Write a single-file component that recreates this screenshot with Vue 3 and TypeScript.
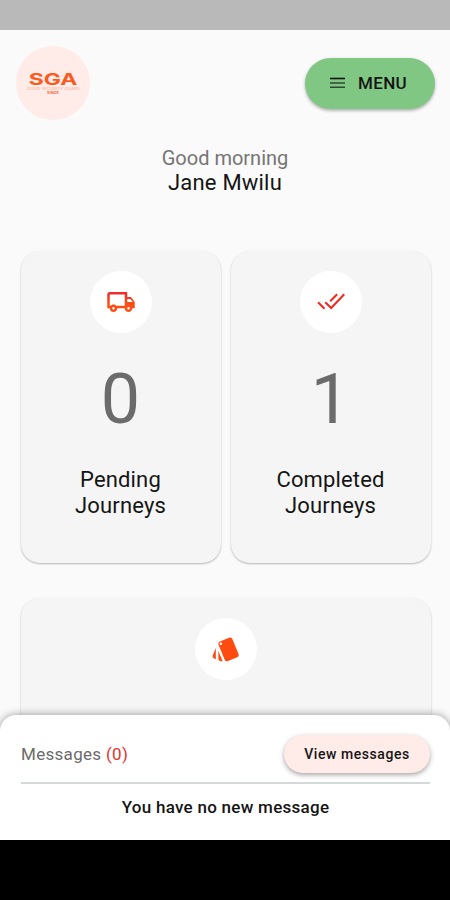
<script setup lang="ts">
interface Stat {
  icon: 'truck' | 'checks'
  count: number
  label: string
}

const userName = 'Jane Mwilu'
const messageCount = 0
const stats: Stat[] = [
  { icon: 'truck', count: 0, label: 'Pending Journeys' },
  { icon: 'checks', count: 1, label: 'Completed Journeys' },
]
</script>

<template>
  <div class="screen">
    <div class="status-bar"></div>
    <main class="content">
      <header class="header">
        <div class="logo">
          <svg width="74" height="74" viewBox="0 0 74 74">
            <text class="logo-name" x="12.800" y="39.300" textLength="48.500" lengthAdjust="spacingAndGlyphs">SGA</text>
            <text class="logo-line" x="11" y="43.600" textLength="53" lengthAdjust="spacingAndGlyphs">GOOD SECURITY GUARD</text>
            <text class="logo-sub" x="31" y="48.200" textLength="12" lengthAdjust="spacingAndGlyphs">SINCE</text>
          </svg>
        </div>
        <button class="menu">
          <svg width="15" height="12" viewBox="0 0 15 12">
            <path d="M0 1.500h15" stroke="#0c140d" stroke-width="1.600" />
            <path d="M0 6h15M0 10.300h15" stroke="#2f4a31" stroke-width="1.500" />
          </svg>
          <span>MENU</span>
        </button>
      </header>

      <section class="greeting">
        <div class="hello">Good morning</div>
        <div class="name">{{ userName }}</div>
      </section>

      <section class="cards">
        <article v-for="s in stats" :key="s.label" class="card">
          <div class="badge">
            <svg v-if="s.icon === 'truck'" width="30" height="30" viewBox="0 0 24 24">
              <defs>
                <linearGradient id="truckFill" x1="0" y1="0" x2="0" y2="1">
                  <stop offset="0" stop-color="#f0282c" />
                  <stop offset="0.6" stop-color="#ff4e14" />
                </linearGradient>
              </defs>
              <path fill="url(#truckFill)" d="M20 8h-3V4H3c-1.100 0-2 .9-2 2v11h2c0 1.660 1.340 3 3 3s3-1.340 3-3h6c0 1.660 1.340 3 3 3s3-1.340 3-3h2v-5l-3-4zm-.5 1.500l1.960 2.500H17V9.500h2.500zM6 18c-.55 0-1-.45-1-1s.45-1 1-1 1 .45 1 1-.45 1-1 1zm2.220-3c-.55-.61-1.330-1-2.220-1s-1.670.39-2.220 1H3V6h12v9H8.220zM18 18c-.55 0-1-.45-1-1s.45-1 1-1 1 .45 1 1-.45 1-1 1z" />
            </svg>
            <svg v-else width="30" height="30" viewBox="0 0 30 30" fill="none" stroke="#ee2c22" stroke-width="2.100">
              <path d="M2 15.200l6.500 6.600M9.200 15.200l6 5.800L28.200 7.300M14.200 14.300l7-7.100" />
            </svg>
          </div>
          <div class="count">{{ s.count }}</div>
          <div class="label">{{ s.label }}</div>
        </article>
        <article class="card wide">
          <div class="badge">
            <svg width="30" height="30" viewBox="0 0 24 24">
              <path fill="#ff4a10" d="M2.530 19.650l1.340.56v-9.030l-2.430 5.860c-.41 1.020.08 2.190 1.090 2.610zm19.500-3.700L17.070 3.980c-.31-.75-1.040-1.210-1.810-1.230-.26 0-.53.04-.79.15L7.100 5.950c-.75.31-1.210 1.030-1.230 1.800-.01.27.04.54.15.8l4.960 11.970c.31.76 1.050 1.220 1.830 1.230.26 0 .52-.05.77-.15l7.360-3.050c1.020-.42 1.510-1.590 1.090-2.600zM7.880 8.750c-.55 0-1-.45-1-1s.45-1 1-1 1 .45 1 1-.45 1-1 1zm-2 11c0 1.100.9 2 2 2h1.450l-3.450-8.340v6.340z" />
            </svg>
          </div>
        </article>
      </section>
    </main>

    <section class="messages">
      <div class="messages-head">
        <div class="messages-title">Messages <span class="red">({{ messageCount }})</span></div>
        <button class="view">View messages</button>
      </div>
      <p class="empty">You have no new message</p>
    </section>
    <div class="nav-bar"></div>
  </div>
</template>

<style>
body {
  margin: 0;
}
</style>

<style scoped>
.screen {
  display: flex;
  flex-direction: column;
  height: 900px;
  overflow: hidden;
  background: #fafafa;
  color: #151515;
  font-family: Roboto, sans-serif;
}
.status-bar {
  flex: none;
  height: 30px;
  background: #b9b9b9;
}
.content {
  flex: 1;
  min-height: 0;
}
.header {
  display: flex;
  justify-content: space-between;
  align-items: center;
  padding: 16px 15px 0 16px;
  height: 74px;
}
.logo {
  width: 74px;
  height: 74px;
  border-radius: 50%;
  background: #ffebe8;
}
.logo svg {
  display: block;
}
.logo-name {
  fill: #fa5a1e;
  font: 700 16px Inter, sans-serif;
}
.logo-line {
  fill: #f7a98e;
  font: 400 3.400px Inter, sans-serif;
}
.logo-sub {
  fill: #f4683c;
  font: 700 3px Inter, sans-serif;
}
button {
  border: 0;
  padding: 0;
  color: #151515;
  font-family: inherit;
}
.menu {
  display: flex;
  align-items: center;
  justify-content: center;
  gap: 13px;
  width: 130px;
  height: 51px;
  padding-right: 3px;
  border-radius: 26px;
  background: #81c784;
  box-shadow: 0 2px 3px rgba(0, 0, 0, 0.22), 0 1px 4px rgba(0, 0, 0, 0.1);
  font-size: 17px;
  font-weight: 500;
  letter-spacing: 0.300px;
}
.greeting {
  padding-top: 26px;
  text-align: center;
}
.hello {
  font-size: 20px;
  line-height: 24px;
  color: #757575;
}
.name {
  font-size: 22px;
  line-height: 26px;
  letter-spacing: 0.200px;
}
.cards {
  display: grid;
  grid-template-columns: 1fr 1fr;
  gap: 35px 10px;
  padding: 55px 19.500px 0 20.500px;
}
.card {
  box-sizing: border-box;
  display: flex;
  flex-direction: column;
  align-items: center;
  height: 312px;
  padding-top: 20px;
  border-radius: 19px;
  background: #f5f5f5;
  box-shadow: 0 1px 2px rgba(0, 0, 0, 0.28);
}
.wide {
  grid-column: 1 / -1;
}
.badge {
  display: flex;
  align-items: center;
  justify-content: center;
  width: 62px;
  height: 62px;
  border-radius: 50%;
  background: #fff;
}
.count {
  margin-top: 25px;
  font-size: 70px;
  line-height: 82px;
  color: #6b6b6b;
}
.label {
  width: 130px;
  margin-top: 27px;
  text-align: center;
  font-size: 22px;
  line-height: 26px;
  letter-spacing: 0.150px;
}
.messages {
  position: relative;
  box-sizing: border-box;
  flex: none;
  height: 125px;
  padding: 20px 20px 0 21px;
  border-radius: 16px 16px 0 0;
  background: #fff;
  box-shadow: 0 0 8px rgba(0, 0, 0, 0.4);
}
.messages-head {
  display: flex;
  justify-content: space-between;
  align-items: center;
  height: 38px;
  padding-bottom: 9px;
  border-bottom: 2px solid #d5d8d8;
}
.messages-title {
  font-size: 17px;
  letter-spacing: 0.300px;
  color: #6b6b6b;
}
.red {
  color: #e92f2a;
}
.view {
  width: 146px;
  height: 38px;
  border-radius: 19px;
  background: #ffebe8;
  box-shadow: 0 2px 5px rgba(0, 0, 0, 0.35);
  font-size: 14px;
  font-weight: 500;
  letter-spacing: 0.550px;
}
.empty {
  margin: 12px 0 0;
  text-align: center;
  font-size: 17px;
  font-weight: 500;
  line-height: 22px;
  letter-spacing: 0.270px;
}
.nav-bar {
  position: relative;
  flex: none;
  height: 60px;
  background: #000;
}
</style>
